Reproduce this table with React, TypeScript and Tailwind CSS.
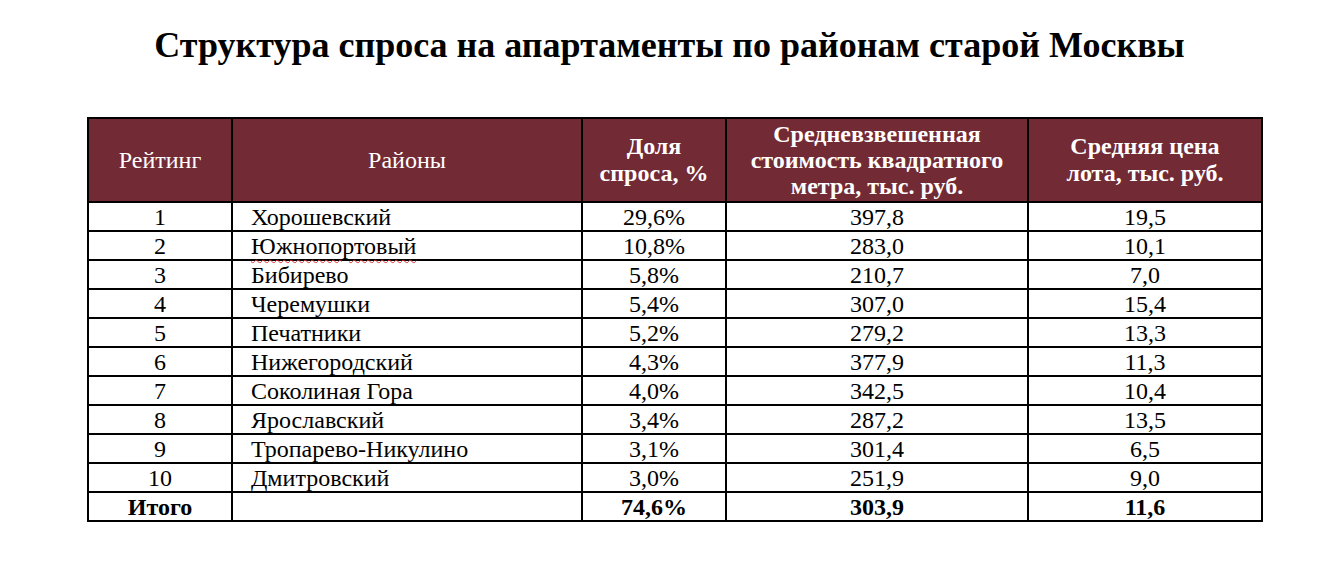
const rows = [
  ['1', 'Хорошевский', '29,6%', '397,8', '19,5'],
  ['2', 'Южнопортовый', '10,8%', '283,0', '10,1'],
  ['3', 'Бибирево', '5,8%', '210,7', '7,0'],
  ['4', 'Черемушки', '5,4%', '307,0', '15,4'],
  ['5', 'Печатники', '5,2%', '279,2', '13,3'],
  ['6', 'Нижегородский', '4,3%', '377,9', '11,3'],
  ['7', 'Соколиная Гора', '4,0%', '342,5', '10,4'],
  ['8', 'Ярославский', '3,4%', '287,2', '13,5'],
  ['9', 'Тропарево-Никулино', '3,1%', '301,4', '6,5'],
  ['10', 'Дмитровский', '3,0%', '251,9', '9,0'],
]

const cell = 'border-2 border-black h-[29px] p-0 leading-none'

export default function App() {
  return (
    <div className="w-[1339px] h-[587px] bg-white text-black font-['Liberation_Serif','Times_New_Roman',serif]">
      <h1 className="pt-[25px] text-center text-[36px] font-bold leading-[40px]">
        Структура спроса на апартаменты по районам старой Москвы
      </h1>

      <table className="mt-[52px] ml-[87px] w-[1174px] border-collapse border-2 border-black table-fixed text-[24px]">
        <colgroup>
          <col className="w-[144px]" />
          <col className="w-[350px]" />
          <col className="w-[144px]" />
          <col className="w-[302px]" />
          <col className="w-[234px]" />
        </colgroup>
        <thead>
          <tr className="bg-[#722a35] text-white h-[84px]">
            <th className="border-2 border-black font-normal p-0">Рейтинг</th>
            <th className="border-2 border-black font-normal p-0">Районы</th>
            <th className="border-2 border-black font-bold leading-[27px] p-0">
              Доля
              <br />
              спроса, %
            </th>
            <th className="border-2 border-black font-bold leading-[26px] p-0 whitespace-nowrap">
              Средневзвешенная
              <br />
              стоимость квадратного
              <br />
              метра, тыс. руб.
            </th>
            <th className="border-2 border-black font-bold leading-[27px] p-0 whitespace-nowrap">
              Средняя цена
              <br />
              лота, тыс. руб.
            </th>
          </tr>
        </thead>
        <tbody>
          {rows.map((r) => (
            <tr key={r[0]}>
              <td className={`${cell} text-center`}>{r[0]}</td>
              <td className={`${cell} pl-[18px]`}>
                {r[1] === 'Южнопортовый' ? (
                  <span className="underline decoration-wavy decoration-[#e0312f] decoration-1 underline-offset-[5px]">
                    {r[1]}
                  </span>
                ) : (
                  r[1]
                )}
              </td>
              <td className={`${cell} text-center`}>{r[2]}</td>
              <td className={`${cell} text-center`}>{r[3]}</td>
              <td className={`${cell} text-center`}>{r[4]}</td>
            </tr>
          ))}
          <tr className="font-bold">
            <td className={`${cell} text-center`}>Итого</td>
            <td className={cell}></td>
            <td className={`${cell} text-center`}>74,6%</td>
            <td className={`${cell} text-center`}>303,9</td>
            <td className={`${cell} text-center`}>11,6</td>
          </tr>
        </tbody>
      </table>
    </div>
  )
}
